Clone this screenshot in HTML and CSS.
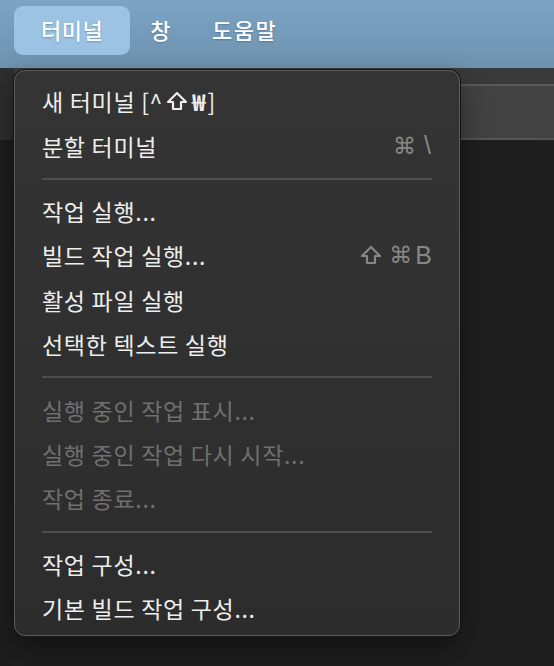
FILE: index.html
```html
<!DOCTYPE html>
<html>
  <head>
    <link rel="stylesheet" href="styles.css">
  </head>
  <body>
    <header class="menubar">
      <span class="menubar-item active">터미널</span>
      <span class="menubar-item">창</span>
      <span class="menubar-item">도움말</span>
    </header>

    <main class="workspace">
      <div class="side"></div>
      <div class="window">
        <div class="titlebar"></div>
        <div class="toolbar"></div>
        <div class="editor"></div>
      </div>
    </main>

    <nav class="menu">
      <div class="menu-item">
        <span class="label">새 터미널 [^<svg class="shift" viewBox="0 0 22 20"><path d="M11 2 L20 11 H15 V18 H7 V11 H2 Z" /></svg><span class="won">₩</span>]</span>
      </div>
      <div class="menu-item">
        <span class="label">분할 터미널</span>
        <span class="shortcut"><span class="cmd">⌘</span><span class="slash">\</span></span>
      </div>
      <div class="separator"></div>
      <div class="menu-item"><span class="label">작업 실행...</span></div>
      <div class="menu-item">
        <span class="label">빌드 작업 실행...</span>
        <span class="shortcut"><svg class="shift" viewBox="0 0 22 20"><path d="M11 2 L20 11 H15 V18 H7 V11 H2 Z" /></svg><span class="cmd">⌘</span>B</span>
      </div>
      <div class="menu-item"><span class="label">활성 파일 실행</span></div>
      <div class="menu-item"><span class="label">선택한 텍스트 실행</span></div>
      <div class="separator"></div>
      <div class="menu-item disabled"><span class="label">실행 중인 작업 표시...</span></div>
      <div class="menu-item disabled"><span class="label">실행 중인 작업 다시 시작...</span></div>
      <div class="menu-item disabled"><span class="label">작업 종료...</span></div>
      <div class="separator"></div>
      <div class="menu-item"><span class="label">작업 구성...</span></div>
      <div class="menu-item"><span class="label">기본 빌드 작업 구성...</span></div>
    </nav>
  </body>
</html>
```

FILE: styles.css
```css
html,
body {
  margin: 0;
  height: 100%;
}

body {
  font-family: "Noto Sans CJK KR", "Noto Sans", sans-serif;
  background-color: #1e1e1e;
  display: flex;
  flex-direction: column;
  overflow: hidden;
}

.menubar {
  height: 68px;
  flex-shrink: 0;
  display: flex;
  align-items: center;
  padding-left: 14px;
  background: linear-gradient(180deg, #7ba3c3 0%, #6e93b0 100%);
  box-sizing: border-box;
  padding-bottom: 8px;
}

.menubar-item {
  color: #ffffff;
  font-size: 22px;
  font-weight: 500;
  height: 49px;
  line-height: 47px;
  padding: 0 20px;
  letter-spacing: 1.5px;
  text-shadow: 0 1px 2px rgba(40, 60, 80, 0.35);
}

.menubar-item.active {
  background-color: #9cc3e3;
  border-radius: 9px;
  padding: 0 27px;
  letter-spacing: 0.5px;
}

.workspace {
  flex: 1;
  display: flex;
}

.side {
  width: 14px;
  background: linear-gradient(180deg, #2e2e2e 0, #2e2e2e 72px, #1e1e1e 72px);
}

.window {
  flex: 1;
  display: flex;
  flex-direction: column;
}

.titlebar {
  height: 16px;
  background-color: #3a3a3a;
  border-bottom: 2px solid #595959;
}

.toolbar {
  height: 52px;
  background: linear-gradient(90deg, #474747, #424242);
  border-bottom: 2px solid #555555;
}

.editor {
  flex: 1;
  background-color: #1f1f1f;
}

.menu {
  position: absolute;
  left: 14px;
  top: 70px;
  width: 446px;
  box-sizing: border-box;
  padding: 8px 0 5px;
  background: linear-gradient(180deg, #343434 0%, #2c2c2c 100%);
  border: 1px solid #5c5c5c;
  border-radius: 11px;
  box-shadow: 0 0 0 1px #151515, 0 12px 30px rgba(0, 0, 0, 0.45);
}

.menu-item {
  height: 44.4px;
  display: flex;
  align-items: center;
  justify-content: space-between;
  padding: 0 27px;
  color: #eeeeee;
  font-size: 23px;
}

.label {
  display: flex;
  align-items: center;
  letter-spacing: 0.7px;
}

.won {
  font-weight: 700;
  margin: 0 1px;
}

.menu-item.disabled {
  color: #707070;
}

.shortcut {
  display: flex;
  align-items: center;
  color: #878787;
  font-family: "Liberation Sans", sans-serif;
  font-size: 25px;
}

.cmd {
  font-family: "DejaVu Sans", sans-serif;
  font-size: 23px;
  margin-right: 3px;
}

.slash {
  margin-left: 5px;
  margin-right: 1px;
  font-weight: 300;
}

.shift {
  width: 22px;
  height: 20px;
  margin-right: 7px;
}

.label .shift {
  margin: 0 3px;
}

.shift path {
  fill: none;
  stroke: currentColor;
  stroke-width: 2.2;
  stroke-linejoin: round;
}

.separator {
  height: 2px;
  margin: 10px 27px 9px;
  background-color: #4e4e4e;
}
```
